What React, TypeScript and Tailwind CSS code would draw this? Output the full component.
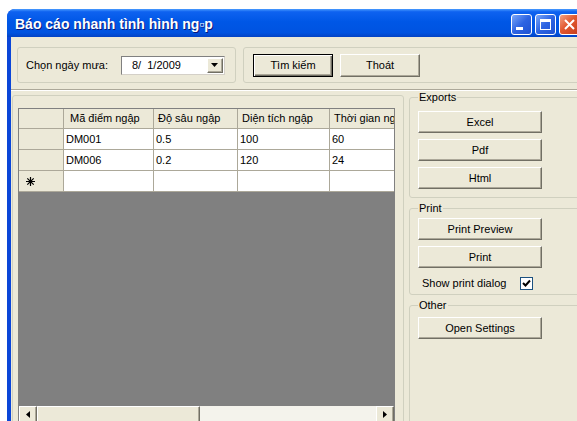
import React from "react";

const ui = "font-['Liberation_Sans','DejaVu_Sans',sans-serif] text-[11px] text-black";

const raised =
  "bg-[#ECE9D8] border border-t-white border-l-white border-r-[#716F64] border-b-[#716F64] shadow-[inset_-1px_-1px_#ACA899]";

function Btn({
  label,
  className = "",
  isDefault = false,
}: {
  label: string;
  className?: string;
  isDefault?: boolean;
}) {
  const face = isDefault
    ? "bg-[#ECE9D8] border border-black shadow-[inset_1px_1px_#fff,inset_-1px_-1px_#716F64,inset_-2px_-2px_#ACA899]"
    : raised;
  return (
    <button className={`flex items-center justify-center leading-none ${face} ${className}`}>
      {label}
    </button>
  );
}

function TitleButtons() {
  return (
    <div className="flex gap-[3px] self-start mt-[5px] pr-[7px]">
      <div className="w-[21px] h-[21px] rounded-[3px] border border-white bg-[linear-gradient(135deg,#7AA7F9,#2D64E2_50%,#1F52D2)]">
        <svg width="19" height="19">
          <rect x="4" y="12" width="7" height="3" fill="white" />
        </svg>
      </div>
      <div className="w-[21px] h-[21px] rounded-[3px] border border-white bg-[linear-gradient(135deg,#7AA7F9,#2D64E2_50%,#1F52D2)]">
        <svg width="19" height="19">
          <rect x="4.5" y="4.5" width="10" height="10" fill="none" stroke="white" strokeWidth="1" />
          <rect x="4" y="4" width="11" height="3" fill="white" />
        </svg>
      </div>
      <div className="w-[21px] h-[21px] rounded-[3px] border border-white bg-[linear-gradient(135deg,#F2A285,#E2582F_45%,#C63C1C)]">
        <svg width="19" height="19">
          <path d="M5 5 L14 14 M14 5 L5 14" stroke="white" strokeWidth="2" />
        </svg>
      </div>
    </div>
  );
}

function DatePicker() {
  return (
    <div className="ml-[13px] w-[104px] h-[19px] bg-white border border-t-[#808080] border-l-[#808080] border-r-[#D4D0C8] border-b-[#D4D0C8] flex items-center">
      <span className="pl-[10px] flex-1">8/&nbsp;&nbsp;1/2009</span>
      <div className={`w-[16px] h-[15px] mr-[1px] flex items-center justify-center ${raised}`}>
        <svg width="7" height="4">
          <polygon points="0,0 7,0 3.5,4" fill="black" />
        </svg>
      </div>
    </div>
  );
}

const cols = ["Mã điểm ngập", "Độ sâu ngập", "Diện tích ngập", "Thời gian ngập"];
const rows = [
  ["DM001", "0.5", "100", "60"],
  ["DM006", "0.2", "120", "24"],
  ["", "", "", ""],
];

const gridCols = "grid grid-cols-[45px_90px_84px_92px_100px] w-max";

function DataGrid() {
  return (
    <div className="w-[377px] h-[316px] border border-[#808080] bg-[#808080] flex flex-col overflow-hidden">
      <div className={`${gridCols} h-[20px]`}>
        <div className="bg-[#ECE9D8] border-r border-b border-[#ACA899]" />
        {cols.map((c, i) => (
          <div
            key={c}
            className={`bg-[#ECE9D8] border-r border-b border-[#ACA899] flex items-center whitespace-nowrap overflow-hidden ${i === 0 ? "pl-[6px]" : "pl-[4px]"}`}
          >
            {c}
          </div>
        ))}
      </div>
      {rows.map((r, ri) => (
        <div key={ri} className={`${gridCols} h-[21px]`}>
          <div className="bg-[#ECE9D8] border-r border-b border-[#ACA899] flex items-center pl-[7px]">
            {ri === rows.length - 1 && (
              <svg width="9" height="9" viewBox="0 0 9 9">
                <path d="M4.5 0 V9 M0 4.5 H9 M1.3 1.3 L7.7 7.7 M7.7 1.3 L1.3 7.7" stroke="black" strokeWidth="1.2" />
              </svg>
            )}
          </div>
          {r.map((v, ci) => (
            <div key={ci} className="bg-white border-r border-b border-[#ACA899] flex items-center pl-[2px]">
              {v}
            </div>
          ))}
        </div>
      ))}
      <div className="flex-1" />
      <div className="h-[17px] flex bg-[#F4F3EC]">
        <div className={`w-[18px] flex items-center justify-center ${raised}`}>
          <svg width="4" height="7">
            <polygon points="4,0 0,3.5 4,7" fill="black" />
          </svg>
        </div>
        <div className={`w-[163px] ${raised}`} />
        <div className="flex-1" />
        <div className={`w-[18px] flex items-center justify-center ${raised}`}>
          <svg width="4" height="7">
            <polygon points="0,0 4,3.5 0,7" fill="black" />
          </svg>
        </div>
      </div>
    </div>
  );
}

function Group({
  title,
  className = "",
  children,
}: {
  title: string;
  className?: string;
  children: React.ReactNode;
}) {
  return (
    <fieldset className={`border border-[#D0D0BF] rounded-[3px] px-[8px] ${className}`}>
      <legend className="px-[1px] leading-[13px]">{title}</legend>
      {children}
    </fieldset>
  );
}

export default function App() {
  return (
    <div className={`w-[577px] h-[421px] overflow-hidden bg-white pt-[9px] pl-[7px] ${ui}`}>
      <div className="w-[580px] h-[440px] flex flex-col rounded-t-[8px] overflow-hidden bg-[#0A46D8]">
        {/* title bar */}
        <div className="h-[28px] shrink-0 flex items-center justify-between bg-[linear-gradient(180deg,#4A9BFF_0%,#0E62F0_10%,#0057E6_45%,#0053E0_85%,#0343C4_100%)]">
          <span className="pl-[8px] mt-[3px] text-white font-bold text-[14px] [text-shadow:1px_1px_#0A1A7A]">
            Báo cáo nhanh tình hình ng▫p
          </span>
          <TitleButtons />
        </div>

        {/* client area */}
        <div className="flex-1 mx-[4px] bg-[#ECE9D8] flex flex-col">
          <div className="h-[52px] shrink-0 flex items-start gap-[7px] pt-[10px] pl-[6px]">
            <div className="w-[219px] h-[36px] border border-[#D0D0BF] rounded-[3px] flex items-center pl-[8px]">
              <span>Chọn ngày mưa:</span>
              <DatePicker />
            </div>
            <div className="flex-1 h-[36px] border border-[#D0D0BF] rounded-[3px] flex items-center pl-[9px] gap-[7px]">
              <Btn label="Tìm kiếm" isDefault className="w-[80px] h-[23px]" />
              <Btn label="Thoát" className="w-[80px] h-[23px]" />
            </div>
          </div>

          <div className="h-[2px] shrink-0 border-t border-[#ACA899] bg-white" />

          <div className="flex-1 flex">
            <div className="ml-[1px] mt-[4px] w-[392px] border border-[#D0D0BF] rounded-[3px] pt-[12px] pl-[5px]">
              <DataGrid />
            </div>

            <div className="flex-1 flex flex-col pl-[5px]">
              <Group title="Exports" className="pb-[8px]">
                <div className="flex flex-col gap-[6px] pt-[7px]">
                  <Btn label="Excel" className="w-[124px] h-[22px]" />
                  <Btn label="Pdf" className="w-[124px] h-[22px]" />
                  <Btn label="Html" className="w-[124px] h-[22px]" />
                </div>
              </Group>

              <Group title="Print" className="mt-[4px] pb-[4px]">
                <div className="flex flex-col gap-[6px] pt-[3px]">
                  <Btn label="Print Preview" className="w-[124px] h-[22px]" />
                  <Btn label="Print" className="w-[124px] h-[22px]" />
                </div>
                <div className="mt-[9px] h-[13px] flex items-center pl-[4px]">
                  <span>Show print dialog</span>
                  <div className="ml-[14px] w-[13px] h-[13px] bg-white border border-[#1C5180] flex items-center justify-center">
                    <svg width="9" height="9" viewBox="0 0 9 9">
                      <polyline points="1,4 3.5,6.5 8,1.5" fill="none" stroke="black" strokeWidth="2" />
                    </svg>
                  </div>
                </div>
              </Group>

              <Group title="Other" className="mt-[4px] flex-1">
                <div className="pt-[5px]">
                  <Btn label="Open Settings" className="w-[124px] h-[22px]" />
                </div>
              </Group>
            </div>
          </div>
        </div>
      </div>
    </div>
  );
}
